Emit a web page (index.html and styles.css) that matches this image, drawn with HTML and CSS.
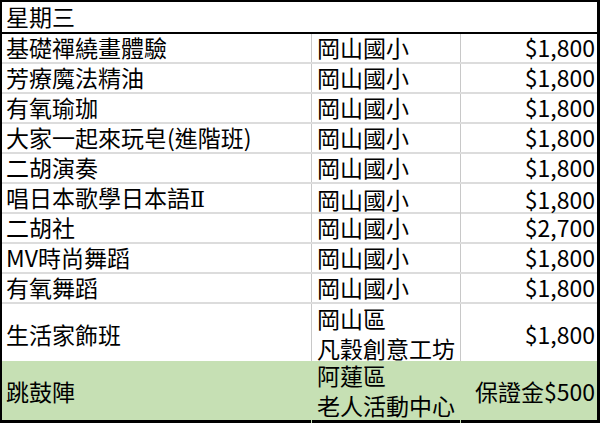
FILE: index.html
```html
<!DOCTYPE html>
<html lang="zh-Hant">
<head>
<meta charset="utf-8">
<title>星期三</title>
<link rel="stylesheet" href="styles.css">
</head>
<body>
<div class="sheet">
  <div class="head">星期三</div>
  <div class="row"><div class="c name">基礎禪繞畫體驗</div><div class="c loc">岡山國小</div><div class="c fee">$1,800</div></div>
  <div class="row"><div class="c name">芳療魔法精油</div><div class="c loc">岡山國小</div><div class="c fee">$1,800</div></div>
  <div class="row"><div class="c name">有氧瑜珈</div><div class="c loc">岡山國小</div><div class="c fee">$1,800</div></div>
  <div class="row"><div class="c name">大家一起來玩皂(進階班)</div><div class="c loc">岡山國小</div><div class="c fee">$1,800</div></div>
  <div class="row"><div class="c name">二胡演奏</div><div class="c loc">岡山國小</div><div class="c fee">$1,800</div></div>
  <div class="row"><div class="c name"><span>唱日本歌學日本語<span class="roman">Ⅱ</span></span></div><div class="c loc">岡山國小</div><div class="c fee">$1,800</div></div>
  <div class="row"><div class="c name">二胡社</div><div class="c loc">岡山國小</div><div class="c fee">$2,700</div></div>
  <div class="row"><div class="c name">MV時尚舞蹈</div><div class="c loc">岡山國小</div><div class="c fee">$1,800</div></div>
  <div class="row"><div class="c name">有氧舞蹈</div><div class="c loc">岡山國小</div><div class="c fee">$1,800</div></div>
  <div class="row tall"><div class="c name">生活家飾班</div><div class="c loc"><span class="ln">岡山區</span><span class="ln">凡穀創意工坊</span></div><div class="c fee">$1,800</div></div>
  <div class="row tall green"><div class="c name">跳鼓陣</div><div class="c loc"><span class="ln">阿蓮區</span><span class="ln">老人活動中心</span></div><div class="c fee">保證金$500</div></div>
</div>
</body>
</html>
```
FILE: styles.css
```css
html, body {
  margin: 0;
  padding: 0;
  background: #ffffff;
}
.sheet {
  width: 600px;
  height: 423px;
  box-sizing: border-box;
  border-top: 2px solid #000;
  border-left: 2px solid #000;
  border-right: 3px solid #000;
  border-bottom: 3px solid #000;
  font-family: "Noto Sans CJK TC", "Noto Sans", sans-serif;
  font-size: 23px;
  color: #000;
  display: flex;
  flex-direction: column;
}
.head {
  height: 30px;
  line-height: 28px;
  padding-left: 4px;
  border-bottom: 2px solid #000;
}
.row {
  display: grid;
  grid-template-columns: 309px 149px 137px;
  height: 28px;
  border-bottom: 2px solid #dcdcdc;
}
.c {
  display: flex;
  flex-direction: column;
  justify-content: center;
  line-height: 26px;
  padding-bottom: 2px;
  white-space: nowrap;
}
.name {
  padding-left: 4px;
}
.roman {
  font-family: "DejaVu Serif", "Liberation Serif", serif;
  font-size: 22px;
}
.loc {
  border-left: 1px solid #c8c8c8;
  padding-left: 5px;
}
.fee {
  border-left: 1px solid #c8c8c8;
  padding-right: 2px;
  align-items: flex-end;
}
.ln {
  display: block;
  height: 30px;
  line-height: 28px;
}
.tall {
  height: 57px;
  border-bottom: none;
}
.green {
  height: 59px;
  background: #c6e0b4;
}
.green .loc, .green .fee {
  border-left-color: #c6e0b4;
}
```
